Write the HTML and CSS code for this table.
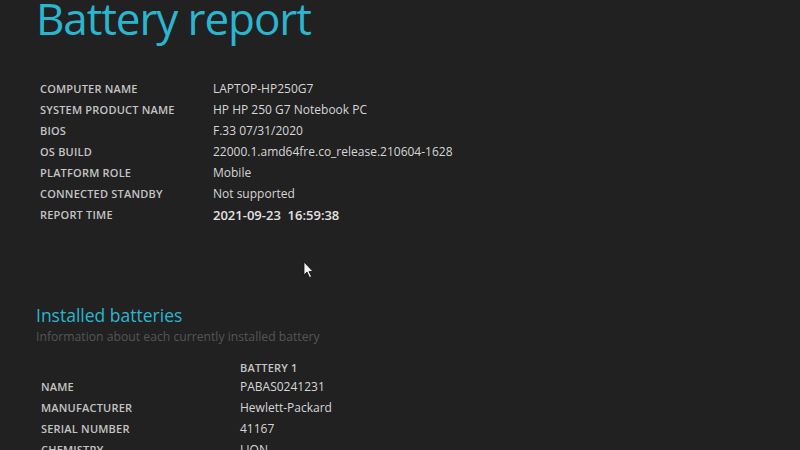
FILE: index.html
```html
<!DOCTYPE html>
<html>
<head>
<meta charset="utf-8">
<link rel="stylesheet" href="styles.css">
</head>
<body>
<main class="page">
  <h1 class="title">Battery report</h1>
  <table class="info">
    <tr><td class="label">COMPUTER NAME</td><td class="value">LAPTOP-HP250G7</td></tr>
    <tr><td class="label">SYSTEM PRODUCT NAME</td><td class="value">HP HP 250 G7 Notebook PC</td></tr>
    <tr><td class="label">BIOS</td><td class="value">F.33 07/31/2020</td></tr>
    <tr><td class="label">OS BUILD</td><td class="value">22000.1.amd64fre.co_release.210604-1628</td></tr>
    <tr><td class="label">PLATFORM ROLE</td><td class="value">Mobile</td></tr>
    <tr><td class="label">CONNECTED STANDBY</td><td class="value">Not supported</td></tr>
    <tr><td class="label">REPORT TIME</td><td class="value strong">2021-09-23&nbsp;&nbsp;16:59:38</td></tr>
  </table>

  <section class="batteries">
    <h2 class="section-title">Installed batteries</h2>
    <p class="section-desc">Information about each currently installed battery</p>
    <table class="bat">
      <tr class="head-row"><td class="label"></td><td class="label">BATTERY 1</td></tr>
      <tr><td class="label">NAME</td><td class="value">PABAS0241231</td></tr>
      <tr><td class="label">MANUFACTURER</td><td class="value">Hewlett-Packard</td></tr>
      <tr><td class="label">SERIAL NUMBER</td><td class="value">41167</td></tr>
      <tr><td class="label">CHEMISTRY</td><td class="value">LION</td></tr>
    </table>
  </section>
</main>
<svg class="cursor" width="12" height="18" viewBox="0 0 12 18">
  <path d="M1 1 L1 14 L4 11 L6.5 16.5 L8.5 15.5 L6 10.5 L10 10.5 Z" fill="#f2f2f2" stroke="#111" stroke-width="0.8"/>
</svg>
</body>
</html>
```
FILE: styles.css
```css
html, body {
  margin: 0;
  padding: 0;
  background: #212121;
  height: 100%;
  overflow: hidden;
}
body {
  position: relative;
  font-family: "Open Sans", "Noto Sans", sans-serif;
  color: #d2d2d2;
}
.page {
  padding-left: 36px;
}
.title {
  margin: -5px 0 0 0;
  font-size: 44px;
  line-height: 46px;
  font-weight: 400;
  color: #2ab6d0;
  letter-spacing: -1.1px;
}
.info {
  border-collapse: collapse;
  margin-top: 37px;
  margin-left: 4px;
}
.info td, .bat td {
  padding: 0;
  height: 21px;
  vertical-align: middle;
  white-space: nowrap;
}
.bat .head-row td {
  height: 17px;
}
.label {
  font-size: 11px;
  font-weight: 600;
  color: #c4c4c4;
  letter-spacing: 0.2px;
}
.info .label {
  width: 173px;
}
.value {
  font-size: 12px;
  color: #d6d6d6;
}
.strong {
  font-size: 13px;
  font-weight: 600;
  color: #e2e2e2;
}
.batteries {
  margin-top: 78px;
}
.section-title {
  margin: 0;
  font-size: 17.5px;
  line-height: 24px;
  font-weight: 400;
  color: #2ab6d0;
}
.section-desc {
  margin: 0;
  font-size: 12.2px;
  line-height: 20px;
  color: #555;
}
.bat {
  border-collapse: collapse;
  margin-top: 12px;
  margin-left: 5px;
}
.bat .label:first-child {
  width: 199px;
}
.cursor {
  position: absolute;
  left: 303px;
  top: 261px;
}
```
